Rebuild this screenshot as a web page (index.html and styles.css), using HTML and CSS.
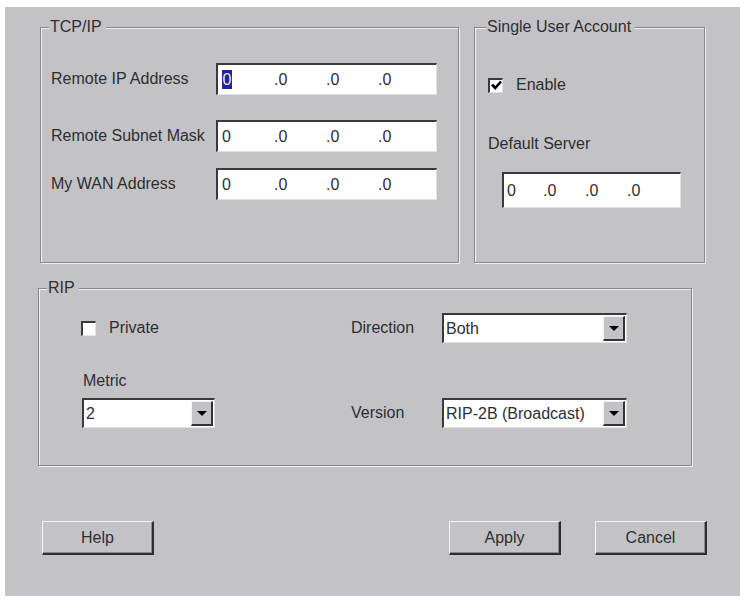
FILE: index.html
```html
<!DOCTYPE html>
<html lang="en">
<head>
  <meta charset="UTF-8">
  <title>WAN Settings</title>
  <link rel="stylesheet" href="styles.css">
</head>
<body>
  <div class="dialog">

    <div class="topRow">
      <!-- TCP/IP -->
      <fieldset class="group tcp">
        <legend>TCP/IP</legend>
        <div class="field">
          <label>Remote IP Address</label>
          <div class="ip"><span><mark class="sel">0</mark></span><span>.0</span><span>.0</span><span>.0</span></div>
        </div>
        <div class="field mask">
          <label>Remote Subnet Mask</label>
          <div class="ip"><span>0</span><span>.0</span><span>.0</span><span>.0</span></div>
        </div>
        <div class="field wan">
          <label>My WAN Address</label>
          <div class="ip"><span>0</span><span>.0</span><span>.0</span><span>.0</span></div>
        </div>
      </fieldset>

      <!-- Single User Account -->
      <fieldset class="group account">
        <legend>Single User Account</legend>
        <label class="check">
          <span class="box">
            <svg width="11" height="11" viewBox="0 0 11 11"><path d="M1 4.5 L4.2 8 L10 1.5" fill="none" stroke="#000" stroke-width="2.6"/></svg>
          </span>
          Enable
        </label>
        <div class="caption">Default Server</div>
        <div class="ip serverIp"><span>0</span><span>.0</span><span>.0</span><span>.0</span></div>
      </fieldset>
    </div>

    <!-- RIP -->
    <fieldset class="group rip">
      <legend>RIP</legend>
      <div class="ripBody">
        <div class="ripLeft">
          <label class="check"><span class="box"></span>Private</label>
          <div class="caption">Metric</div>
          <div class="select metric"><span class="value">2</span><span class="arrow"><i></i></span></div>
        </div>
        <div class="ripRight">
          <div class="row">
            <label>Direction</label>
            <div class="select"><span class="value">Both</span><span class="arrow"><i></i></span></div>
          </div>
          <div class="row">
            <label>Version</label>
            <div class="select"><span class="value">RIP-2B (Broadcast)</span><span class="arrow"><i></i></span></div>
          </div>
        </div>
      </div>
    </fieldset>

    <div class="buttons">
      <button class="btn help">Help</button>
      <button class="btn">Apply</button>
      <button class="btn">Cancel</button>
    </div>

  </div>
</body>
</html>
```
FILE: styles.css
```css
html, body {
  margin: 0;
  background: #fff;
}

body {
  font-family: "Liberation Sans", Arial, sans-serif;
  font-size: 16px;
  line-height: 18px;
  color: #2e2e30;
}

.dialog {
  box-sizing: border-box;
  width: 735px;
  height: 589px;
  margin: 7px 0 0 5px;
  padding-top: 11px;
  background: #c3c3c7;
}

.topRow {
  display: flex;
  gap: 15px;
  margin-left: 35px;
}

/* etched group box */
.group {
  box-sizing: border-box;
  margin: 0;
  min-width: 0;
  border: 1px solid #86868b;
  box-shadow: inset 1px 1px 0 #f2f2f4, 1px 1px 0 #f2f2f4;
}

.group legend {
  padding: 0 4px 0 1px;
  margin-left: -2px;
  background: #c3c3c7;
}

.tcp {
  width: 419px;
  height: 245px;
  padding: 27px 0 0 10px;
}

.field {
  display: flex;
  align-items: center;
}

.field.mask {
  margin-top: 25px;
}

.field.wan {
  margin-top: 16px;
}

.field label {
  width: 165px;
}

/* sunken white boxes */
.ip, .box, .select {
  box-sizing: border-box;
  background: #fff;
  border-top: 2px solid #3a3a3c;
  border-left: 2px solid #3a3a3c;
  border-right: 1px solid #e2e2e5;
  border-bottom: 1px solid #e2e2e5;
}

.ip {
  display: flex;
  align-items: center;
  width: 221px;
  height: 32px;
  padding-left: 4px;
}

.ip span {
  flex: none;
  width: 52px;
}

.sel {
  display: inline-block;
  width: 10px;
  line-height: 19px;
  text-align: center;
  background: #24248f;
  color: #e4e4f4;
}

.account {
  width: 231px;
  height: 245px;
  padding: 40px 0 0 13px;
}

.check {
  display: flex;
  align-items: center;
  gap: 13px;
  height: 18px;
}

.box {
  display: flex;
  align-items: center;
  justify-content: center;
  width: 15px;
  height: 15px;
}

.account .caption {
  margin-top: 41px;
}

.serverIp {
  width: 179px;
  height: 36px;
  margin: 19px 0 0 14px;
  padding-left: 3px;
}

.serverIp span {
  width: 42px;
}

.serverIp span:first-child {
  width: 36px;
}

.rip {
  width: 654px;
  height: 187px;
  margin: 16px 0 0 33px;
  padding: 16px 0 0 10px;
}

.ripBody {
  display: flex;
  margin-left: 32px;
}

.ripLeft {
  width: 270px;
  display: flex;
  flex-direction: column;
  align-items: flex-start;
}

.ripLeft .check {
  height: 30px;
}

.ripLeft .caption {
  margin: 29px 0 0 2px;
}

.row {
  display: flex;
  align-items: center;
  height: 30px;
}

.row + .row {
  margin-top: 55px;
}

.row label {
  width: 91px;
}

.select {
  display: flex;
  align-items: center;
  width: 185px;
  height: 30px;
  padding-left: 2px;
}

.select.metric {
  width: 133px;
  margin: 8px 0 0 1px;
}

.select .value {
  flex: 1;
}

.select .arrow {
  display: flex;
  align-items: center;
  justify-content: center;
  align-self: stretch;
  width: 19px;
  margin: 1px;
  background: #c3c3c7;
  border-top: 1px solid #f2f2f4;
  border-left: 1px solid #f2f2f4;
  border-right: 2px solid #333;
  border-bottom: 2px solid #333;
}

.select .arrow i {
  width: 0;
  height: 0;
  border-left: 5px solid transparent;
  border-right: 5px solid transparent;
  border-top: 5px solid #000;
}

.buttons {
  display: flex;
  gap: 34px;
  margin: 55px 33px 0 37px;
}

.btn {
  box-sizing: border-box;
  width: 112px;
  height: 34px;
  padding: 0;
  font: inherit;
  color: inherit;
  background: #c3c3c7;
  border-top: 1px solid #f4f4f6;
  border-left: 1px solid #f4f4f6;
  border-right: 2px solid #2e2e30;
  border-bottom: 2px solid #2e2e30;
  box-shadow: inset -1px -1px 0 #8a8a8e;
}

.help {
  margin-right: auto;
}
```
